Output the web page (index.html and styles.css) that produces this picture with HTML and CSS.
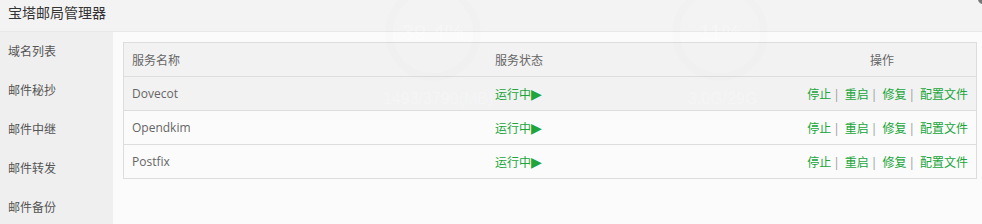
FILE: index.html
```html
<!DOCTYPE html>
<html lang="zh-CN">
<head>
    <meta charset="UTF-8">
    <title>宝塔邮局管理器</title>
    <link rel="stylesheet" href="styles.css">
</head>
<body>
    <div class="layer">
        <div class="layer-title">宝塔邮局管理器</div>
        <span class="layer-close"></span>
        <div class="layer-body">
            <ul class="side-menu">
                <li>域名列表</li>
                <li>邮件秘抄</li>
                <li>邮件中继</li>
                <li>邮件转发</li>
                <li>邮件备份</li>
            </ul>
            <div class="main">
                <table class="service-table">
                    <thead>
                        <tr>
                            <th class="col-name">服务名称</th>
                            <th class="col-status">服务状态</th>
                            <th class="col-opt">操作</th>
                        </tr>
                    </thead>
                    <tbody>
                        <tr class="hover">
                            <td>Dovecot</td>
                            <td class="running">运行中<span class="play">▶</span></td>
                            <td class="opt"><a>停止</a><span class="sep">|</span><a>重启</a><span class="sep">|</span><a>修复</a><span class="sep">|</span><a>配置文件</a></td>
                        </tr>
                        <tr>
                            <td>Opendkim</td>
                            <td class="running">运行中<span class="play">▶</span></td>
                            <td class="opt"><a>停止</a><span class="sep">|</span><a>重启</a><span class="sep">|</span><a>修复</a><span class="sep">|</span><a>配置文件</a></td>
                        </tr>
                        <tr>
                            <td>Postfix</td>
                            <td class="running">运行中<span class="play">▶</span></td>
                            <td class="opt"><a>停止</a><span class="sep">|</span><a>重启</a><span class="sep">|</span><a>修复</a><span class="sep">|</span><a>配置文件</a></td>
                        </tr>
                    </tbody>
                </table>
            </div>
        </div>

        <!-- dashboard behind the dialog, showing through -->
        <div class="ghost">
            <div class="ghost-circle" style="left: 385px;"><b>39.4%</b></div>
            <div class="ghost-circle" style="left: 672px;"><b>11%</b></div>
            <div class="ghost-text" style="left: 383px;">1493/3790(MB)</div>
            <div class="ghost-text" style="left: 688px;">3.0G/29G</div>
        </div>
    </div>
</body>
</html>
```

FILE: styles.css
```css
body {
    margin: 0;
    font-family: "Open Sans", "Noto Sans CJK SC", sans-serif;
    font-size: 12px;
    color: #555;
    background-color: #fafafa;
}
.layer {
    position: relative;
    width: 982px;
    height: 224px;
    overflow: hidden;
    background-color: #fafafa;
}
.layer-title {
    height: 31px;
    line-height: 26px;
    padding: 0 8px;
    font-size: 14px;
    color: #333;
    background-color: #f3f3f3;
    border-bottom: 1px solid #e8e8e8;
}
.layer-close {
    position: absolute;
    top: -6px;
    right: -6px;
    width: 10px;
    height: 10px;
    border-radius: 50%;
    background-color: #777;
    z-index: 3;
}
.layer-body {
    display: flex;
    height: 192px;
}
.side-menu {
    list-style: none;
    margin: 0;
    padding: 0;
    width: 113px;
    background-color: #efefef;
}
.side-menu li {
    height: 39px;
    line-height: 39px;
    padding-left: 8px;
    color: #555;
}
.main {
    flex: 1;
    padding: 10px 5px 0 10px;
    background-color: #fbfbfb;
}
.service-table {
    width: 854px;
    border-collapse: collapse;
    border: 1px solid #ddd;
}
.service-table th,
.service-table td {
    height: 33px;
    padding: 0 8px;
    text-align: left;
    font-weight: normal;
    color: #666;
    border-bottom: 1px solid #ddd;
}
.service-table thead tr {
    background-color: #f2f2f2;
}
.service-table tr.hover {
    background-color: #f2f2f2;
}
.col-name {
    width: 347px;
}
.col-status {
    width: 200px;
}
.service-table th.col-opt {
    text-align: right;
    padding-right: 82px;
}
.service-table td.running {
    color: #20a53a;
}
.play {
    font-family: "DejaVu Sans", sans-serif;
    font-size: 14px;
    line-height: 12px;
}
.service-table td.opt {
    text-align: right;
}
.opt a {
    color: #20a53a;
    cursor: pointer;
}
.sep {
    color: #999;
    margin: 0 5px 0 2px;
}
.ghost {
    position: absolute;
    top: 0;
    left: 0;
    right: 0;
    bottom: 0;
    pointer-events: none;
    z-index: 2;
}
.ghost-circle {
    position: absolute;
    top: -15px;
    width: 80px;
    height: 80px;
    border: 8px solid rgba(0, 0, 0, 0.008);
    border-radius: 50%;
    text-align: center;
    line-height: 80px;
}
.ghost-circle b {
    font-family: "Liberation Sans", sans-serif;
    font-size: 22px;
    font-weight: normal;
    color: rgba(255, 255, 255, 0.3);
}
.ghost-text {
    position: absolute;
    top: 90px;
    font-family: "Liberation Sans", sans-serif;
    font-size: 16px;
    color: rgba(255, 255, 255, 0.25);
}
```
